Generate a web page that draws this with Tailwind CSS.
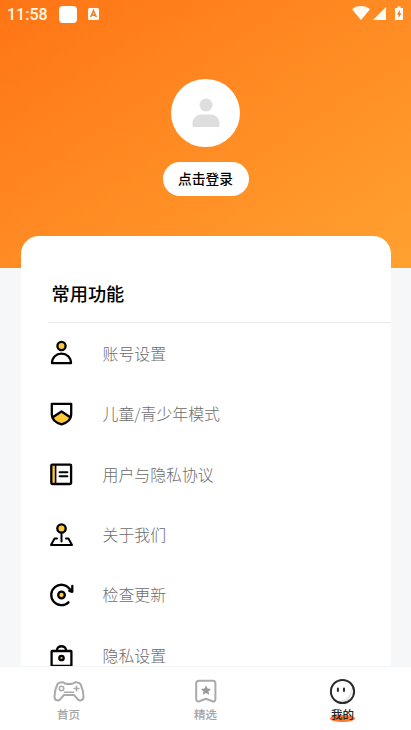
<!DOCTYPE html>
<html lang="zh-CN">
<head>
<meta charset="UTF-8">
<meta name="viewport" content="width=device-width, initial-scale=1">
<title>我的</title>
<script src="https://cdn.jsdelivr.net/npm/@tailwindcss/browser@4"></script>
</head>
<body class="h-[730px] w-[411px] overflow-hidden bg-[#f6f7f9] font-['Noto_Sans_CJK_SC',sans-serif]">
<div class="flex h-[730px] flex-col">
  <header class="flex h-[268px] shrink-0 flex-col bg-linear-to-br from-[#ff7414] to-[#ffa130]">
    <div class="flex h-7 items-center text-[#fff9e8]">
      <span class="ml-[7px] w-[52px] pt-px font-[Roboto,sans-serif] text-[16px] font-medium leading-7">11:58</span>
      <span class="h-[17px] w-[18px] rounded-[4px] bg-white"></span>
      <svg class="ml-[11px]" width="11" height="12" viewBox="0 0 11 12"><rect width="11" height="12" rx="1.5" fill="#fff9f0"/><path d="M2.7 9 5.5 2.8 8.3 9M3.700 7.100h3.600" fill="none" stroke="#e8862e" stroke-width="1.600"/></svg>
      <svg class="ml-auto mr-[7px]" width="52" height="16" viewBox="0 0 52 16" fill="#fffaf2">
        <path d="M0 3.300C5-1.100 13-1.100 18 3.300L9 14Z"/>
        <path d="M34 1v13H21Z"/>
        <path d="M45.500.5h3V2H51v12h-8V2h2.500Z"/>
        <path d="M47.800 4 45 8.500h1.600V12l2.800-4.700h-1.600Z" fill="#f47b19"/>
      </svg>
    </div>
    <div class="mx-auto mt-[51px] flex h-[68px] w-[69px] items-center justify-center rounded-full bg-white">
      <svg width="28" height="30" viewBox="0 0 28 30" fill="#dedede"><circle cx="14" cy="7" r="6.500"/><path d="M.5 27.500V26C.5 19.500 5 16.500 10 16.500h8c5 0 9.500 3 9.500 9.500v1.500q0 1.500-1.500 1.500H2Q.5 29 .5 27.500Z"/></svg>
    </div>
    <button class="mx-auto mt-[15px] h-[34px] w-[86px] rounded-full bg-white pb-[2px] text-[13.700px] font-medium leading-[32px] text-black">点击登录</button>
  </header>

  <main class="relative z-10 mx-auto -mt-8 h-[430px] w-[370px] shrink-0 overflow-hidden rounded-t-[18px] bg-white">
    <h1 class="ml-[27px] flex h-[87px] items-end border-b border-[#e7e9ec] pb-[15px] pl-1 text-[18.200px] font-medium leading-[28px] text-black">常用功能</h1>
    <ul class="text-[15.900px] font-light text-[#6c6c6c]">
      <li class="flex h-[60.400px] items-center gap-[29px] pl-[27px]">
        <svg class="shrink-0" width="26" height="26" viewBox="0 0 26 26" fill="none" stroke="#000" stroke-width="2.300" stroke-linejoin="round"><circle cx="13.500" cy="6" r="4.100" fill="#ffc938"/><path d="M4 23.200c0-5.700 4.200-9.600 9.500-9.600s9.500 3.900 9.500 9.600Z"/></svg>
        <span class="pt-px">账号设置</span></li>
      <li class="flex h-[60.400px] items-center gap-[29px] pl-[27px]">
        <svg class="shrink-0" width="26" height="26" viewBox="0 0 26 26" fill="none" stroke="#000" stroke-width="2.300" stroke-linejoin="round"><path d="m4 16.500 9.500-6 9.500 6c-1.500 3.500-5.500 6-9.500 7.200-4-1.200-8-3.700-9.500-7.200Z" fill="#ffc938" stroke="none"/><path d="M3.800 2.800h19.400v10.700c0 5-4.700 8.400-9.700 9.800-5-1.400-9.700-4.800-9.700-9.800ZM4.800 16.200l8.700-5.700 8.700 5.700"/></svg>
        <span class="pt-px">儿童/青少年模式</span></li>
      <li class="flex h-[60.400px] items-center gap-[29px] pl-[27px]">
        <svg class="shrink-0" width="26" height="26" viewBox="0 0 26 26" fill="none" stroke="#000" stroke-width="2.300" stroke-linejoin="round"><path d="M4 3.500h4v19H4Z" fill="#ffc938" stroke="none"/><rect x="3.300" y="3.600" width="19.800" height="19.400" rx="1"/><path d="M7.600 3.500v19" stroke-width="1.600"/><path d="M11.600 11.300h7.800M11.600 15.300h7.800" stroke-width="2" stroke-linecap="round"/></svg>
        <span class="pt-px">用户与隐私协议</span></li>
      <li class="flex h-[60.400px] items-center gap-[29px] pl-[27px]">
        <svg class="shrink-0" width="26" height="26" viewBox="0 0 26 26" fill="none" stroke="#000" stroke-width="2.300" stroke-linejoin="round" stroke-linecap="round"><circle cx="13.500" cy="7.500" r="4.200" fill="#ffc938"/><path d="M13.500 12v8.500M9 17.500H6.600L3 24h21L20.400 17.500H18" stroke-width="2"/></svg>
        <span class="pt-px">关于我们</span></li>
      <li class="flex h-[60.400px] items-center gap-[29px] pl-[27px]">
        <svg class="shrink-0" width="26" height="26" viewBox="0 0 26 26" fill="none" stroke="#000" stroke-width="2.300" stroke-linejoin="round" stroke-linecap="round"><circle cx="13.500" cy="13" r="3.300" fill="#ffc938"/><path d="M20.500 20.300A10.200 10.200 0 1 1 21.500 6.700L24 9.800M24.300 4V9.800l-3-1"/></svg>
        <span class="pt-px">检查更新</span></li>
      <li class="flex h-[60.400px] items-center gap-[29px] pl-[27px]">
        <svg class="shrink-0" width="26" height="26" viewBox="0 0 26 26" fill="none" stroke="#000" stroke-width="2.300" stroke-linejoin="round"><rect x="3.600" y="9" width="19.800" height="15" rx=".5"/><path d="M9 8.700V8c0-5 9-5 9 0v.7"/><circle cx="13.500" cy="16" r="2.200" fill="#ffc938"/></svg>
        <span class="pt-px">隐私设置</span></li>
    </ul>
  </main>

  <nav class="relative z-20 flex h-[64px] w-full shrink-0 border-t border-[#f3f4f5] bg-white text-[11.500px] font-medium leading-[16px] text-[#a5a5a5]">
    <div class="flex flex-1 flex-col items-center pt-[11px]">
      <svg width="32" height="27" viewBox="0 0 32 27" fill="none" stroke="#aaa" stroke-width="2" stroke-linecap="round" stroke-linejoin="round"><path d="M12 5.500C10 3.700 5.500 4 4.300 6.500 2.700 10 1.500 15 1.500 18.500c0 4.500 4.300 5 6.300 2.200L11 17h10l3.200 3.700c2 2.800 6.300 2.300 6.300-2.200 0-3.500-1.200-8.500-2.800-12C26.500 4 22 3.700 20 5.500Q16 6.500 12 5.500Z"/><circle cx="8.500" cy="10.500" r="2.200" stroke-width="1.600"/><path d="M23.500 8.200v4.600M21.200 10.500h4.600M11.500 14.200h9" stroke-width="1.600"/></svg>
      <span class="mt-px">首页</span>
    </div>
    <div class="flex flex-1 flex-col items-center pt-[11px]">
      <svg width="24" height="27" viewBox="0 0 24 27" fill="none" stroke="#aaa" stroke-width="2" stroke-linejoin="round"><path d="M5 2.800h14q2.400 0 2.400 2.800v15.500c0 2-1.200 2.800-3 2.200L12 20.700l-6.600 2.600c-1.800.6-3.200-.2-3.200-2.200V5.600Q2.200 2.800 5 2.800Z"/><path d="m12 7.500 1.500 3.100 3.500.4-2.500 2.400.6 3.400-3.100-1.700-3.100 1.700.6-3.400L7 11l3.500-.4Z" fill="#999" stroke="none"/></svg>
      <span class="mt-px">精选</span>
    </div>
    <div class="flex flex-1 flex-col items-center pt-[11px] text-[#222]">
      <svg width="27" height="27" viewBox="0 0 27 27"><circle cx="13.500" cy="13.500" r="11.600" fill="#fff"/><path d="M22.500 8c1 7-5 14-13.500 15.500 8 4 16.500-4 13.500-15.500Z" fill="#e9e9e9"/><circle cx="13.500" cy="13.500" r="11.600" fill="none" stroke="#2c2c2c" stroke-width="2"/><path d="M8.900 10.500v2.500M15 10.500v2.500" stroke="#2c2c2c" stroke-width="2" stroke-linecap="round"/></svg>
      <span class="relative mt-px"><i class="absolute -left-px bottom-0 h-[7px] w-[25px] rounded-[50%] bg-[#ff7830]"></i><span class="relative">我的</span></span>
    </div>
  </nav>
</div>
</body>
</html>
